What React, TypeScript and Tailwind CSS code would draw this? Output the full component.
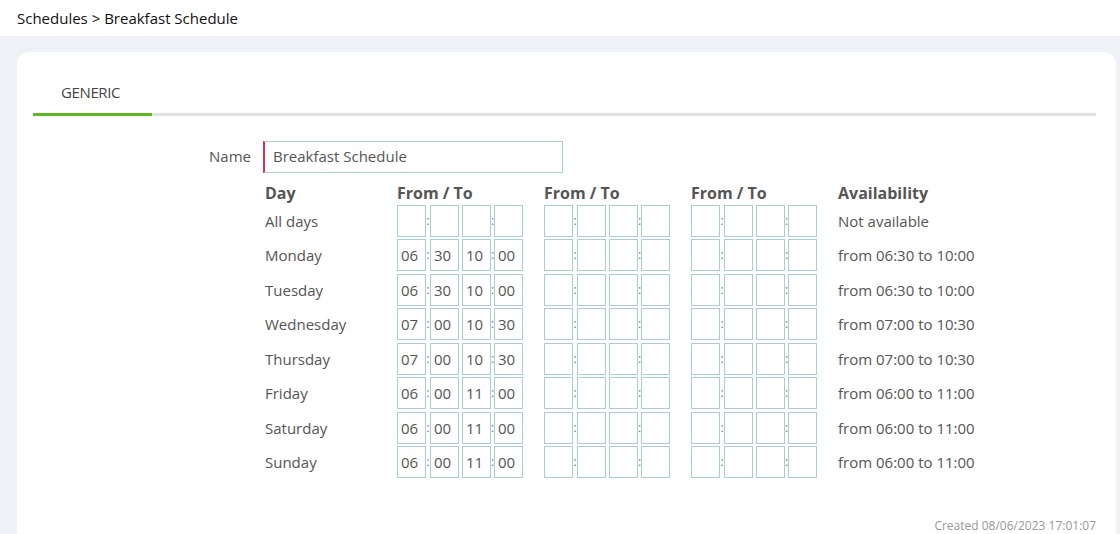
import React from 'react';

const rows: Array<[string, string[], string]> = [
  ['All days', ['', '', '', ''], 'Not available'],
  ['Monday', ['06', '30', '10', '00'], 'from 06:30 to 10:00'],
  ['Tuesday', ['06', '30', '10', '00'], 'from 06:30 to 10:00'],
  ['Wednesday', ['07', '00', '10', '30'], 'from 07:00 to 10:30'],
  ['Thursday', ['07', '00', '10', '30'], 'from 07:00 to 10:30'],
  ['Friday', ['06', '00', '11', '00'], 'from 06:00 to 11:00'],
  ['Saturday', ['06', '00', '11', '00'], 'from 06:00 to 11:00'],
  ['Sunday', ['06', '00', '11', '00'], 'from 06:00 to 11:00'],
];

function Box({ v }: { v: string }) {
  return (
    <div className="w-[29px] h-[32px] border border-[#a9d0d0] flex items-center pl-[3px] text-[15px] text-[#555]">
      {v}
    </div>
  );
}

function Group({ vals }: { vals: string[] }) {
  return (
    <div className="flex items-center w-[147px]">
      <Box v={vals[0]} />
      <span className="w-[4px] text-[12px] text-[#777] leading-none text-center">:</span>
      <Box v={vals[1]} />
      <span className="w-[3px]" />
      <Box v={vals[2]} />
      <span className="w-[3px] text-[12px] text-[#777] leading-none text-center">:</span>
      <Box v={vals[3]} />
    </div>
  );
}

export default function App() {
  return (
    <div className="w-[1120px] h-[534px] bg-[#eef1f6] overflow-hidden" style={{ fontFamily: '"Open Sans", "Noto Sans", sans-serif' }}>
      <div className="h-[36px] bg-white pl-[17px] flex items-center text-[15px] text-[#111]">
        Schedules &gt; Breakfast Schedule
      </div>
      <div className="ml-[17px] mr-[4px] mt-[16px] bg-white rounded-[12px] h-[500px] relative">
        <div className="pt-[29px] pl-[44px] text-[15px] text-[#444] tracking-tight">GENERIC</div>
        <div className="mt-[9px] ml-[16px] mr-[20px] h-[3px] bg-[#e2e2e2] flex">
          <div className="w-[119px] h-full bg-[#5cbb24]" />
        </div>
        <div className="flex items-center mt-[25px]">
          <div className="w-[246px] text-right pr-[12px] text-[15px] text-[#555]">Name</div>
          <div className="w-[300px] h-[32px] border border-[#a9d0d0] border-l-2 border-l-[#d6334a] flex items-center pl-[8px] text-[15px] text-[#555]">
            Breakfast Schedule
          </div>
        </div>
        <div className="ml-[248px] mt-[9px] text-[15px] text-[#555]">
          <div className="flex font-bold h-[22px] items-center text-[16px]">
            <div className="w-[132px]">Day</div>
            <div className="w-[147px]">From / To</div>
            <div className="w-[147px]">From / To</div>
            <div className="w-[147px]">From / To</div>
            <div>Availability</div>
          </div>
          {rows.map(([d, vals, a]) => (
            <div key={d} className="flex items-center h-[34.5px]">
              <div className="w-[132px]">{d}</div>
              <Group vals={vals} />
              <Group vals={['', '', '', '']} />
              <Group vals={['', '', '', '']} />
              <div>{a}</div>
            </div>
          ))}
        </div>
        <div className="absolute right-[20px] top-[466px] text-[12px] leading-[16px] text-[#999]">Created 08/06/2023 17:01:07</div>
      </div>
    </div>
  );
}
